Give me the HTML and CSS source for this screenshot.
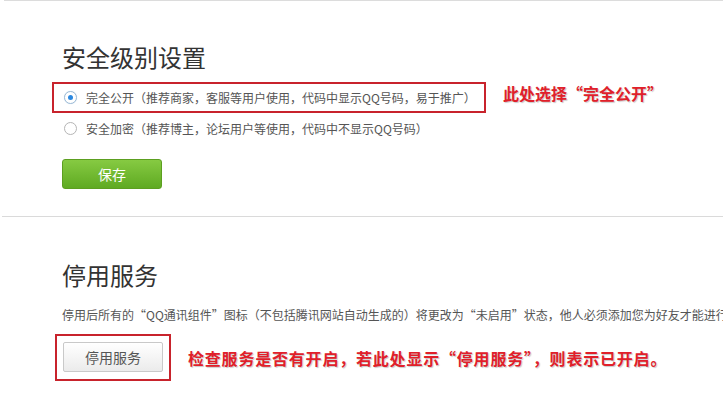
FILE: index.html
```html
<!DOCTYPE html>
<html lang="zh-CN">
<head>
<meta charset="utf-8">
<title>安全级别设置</title>
<link rel="stylesheet" href="styles.css">
</head>
<body>
<div class="top-rule"></div>
<section class="sec sec-level">
  <h2 class="sec-title">安全级别设置</h2>
  <div class="mark-row">
    <label class="opt opt-marked"><span class="radio radio-on"></span><span class="opt-text">完全公开（推荐商家，客服等用户使用，代码中显示QQ号码，易于推广）</span></label>
    <span class="note">此处选择“完全公开”</span>
  </div>
  <label class="opt"><span class="radio"></span><span class="opt-text">安全加密（推荐博主，论坛用户等使用，代码中不显示QQ号码）</span></label>
  <button class="btn btn-save">保存</button>
</section>
<div class="divider"></div>
<section class="sec sec-stop">
  <h2 class="sec-title">停用服务</h2>
  <p class="desc">停用后所有的“QQ通讯组件”图标（不包括腾讯网站自动生成的）将更改为“未启用”状态，他人必须添加您为好友才能进行临时会话。</p>
  <div class="mark-row">
    <div class="mark-box"><button class="btn btn-stop">停用服务</button></div>
    <span class="note note-2">检查服务是否有开启，若此处显示“停用服务”，则表示已开启。</span>
  </div>
</section>
</body>
</html>
```
FILE: styles.css
```css
html, body {
  margin: 0;
  padding: 0;
  background: #fff;
  width: 723px;
  height: 407px;
  overflow: hidden;
  font-family: "Noto Sans CJK SC", "Noto Sans", sans-serif;
  color: #555;
}

.top-rule {
  height: 1px;
  margin-left: 4px;
  background: #dcdcdc;
}

.sec {
  padding-left: 62px;
}

.sec-title {
  margin: 0;
  font-size: 24px;
  line-height: 32px;
  font-weight: 400;
  color: #333;
}

.sec-level .sec-title {
  margin-top: 40px;
}

.mark-row {
  display: flex;
  align-items: center;
}

.opt {
  display: flex;
  align-items: center;
  height: 30px;
  padding-left: 2px;
  font-size: 12px;
  color: #555;
  white-space: nowrap;
}

.opt-marked {
  box-sizing: border-box;
  width: 434px;
  height: 31px;
  margin-top: 9px;
  margin-left: -10px;
  padding-left: 10px;
  border: 2px solid #c8232c;
}

.radio {
  box-sizing: border-box;
  width: 13px;
  height: 13px;
  border: 1px solid #b5b5b5;
  border-radius: 50%;
  margin-right: 9px;
  flex: none;
  display: flex;
  align-items: center;
  justify-content: center;
  background: #fff;
}

.radio-on {
  border-color: #9dbbd6;
  box-shadow: 0 0 1px #cfe0ef;
}

.radio-on::after {
  content: "";
  width: 5px;
  height: 5px;
  border-radius: 50%;
  background: #2b88e0;
}

.note {
  margin-left: 17px;
  font-size: 16px;
  font-weight: 700;
  color: #e0202a;
  text-shadow: 1px 1px 1px #c9c9c9;
  white-space: nowrap;
}

.note-2 {
  letter-spacing: 0.8px;
}

.btn {
  box-sizing: border-box;
  width: 100px;
  height: 30px;
  padding: 0;
  font-family: inherit;
  font-size: 14px;
  cursor: pointer;
  display: block;
}

.btn-save {
  margin-top: 16px;
  background: linear-gradient(#86ca42, #5faa22);
  border: 1px solid #5c9f20;
  border-radius: 3px;
  color: #fff;
}

.divider {
  height: 1px;
  margin: 27px 0 0 2px;
  background: #dadada;
}

.sec-stop .sec-title {
  margin-top: 42px;
}

.desc {
  margin: 14px 0 0;
  font-size: 12px;
  line-height: 20px;
  color: #555;
  white-space: nowrap;
  overflow: hidden;
}

.sec-stop .mark-row {
  margin-top: 9px;
}

.mark-box {
  margin-left: -7px;
  padding: 6px 6px 7px;
  border: 2px solid #c8232c;
}

.btn-stop {
  background: linear-gradient(#ffffff, #ebebeb);
  border: 1px solid #c9c9c9;
  border-radius: 2px;
  color: #555;
}
```
